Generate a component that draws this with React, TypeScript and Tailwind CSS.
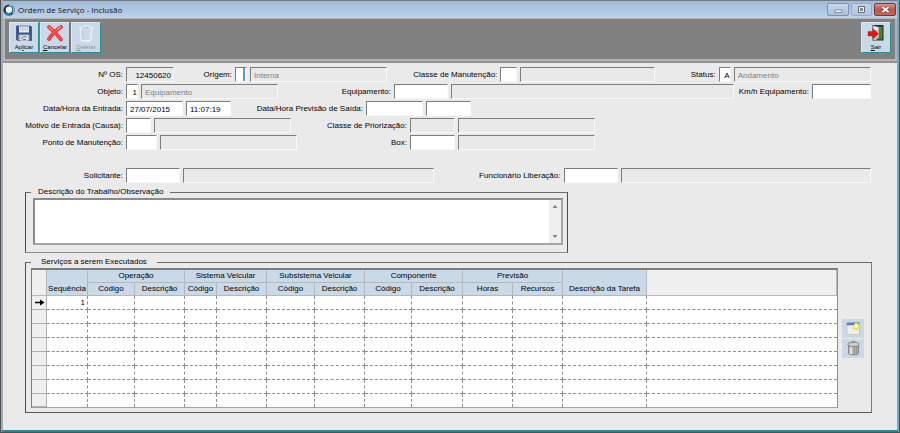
import React, { useState } from 'react';
import { clsx } from 'clsx';

const OPEN_ROWS = [1, 2, 3, 4, 5, 6, 7, 8];

const GROUPS = ['Operação', 'Sistema Veicular', 'Subsistema Veicular', 'Componente'];

const COLUMN_WIDTHS = [
  'w-[15px]',
  'w-[41px]',
  'w-[47px]',
  'w-[50px]',
  'w-[32px]',
  'w-[50px]',
  'w-[48px]',
  'w-[50px]',
  'w-[47px]',
  'w-[51px]',
  'w-[50px]',
  'w-[50px]',
  'w-[84px]',
];

interface FieldProps {
  id: string;
  className: string;
  value?: string;
  readOnly?: boolean;
  label?: string;
}

const Field: React.FC<FieldProps> = ({ id, className, value = '', readOnly = false, label }) => {
  const [text, setText] = useState(value);

  return (
    <input
      id={id}
      type="text"
      aria-label={label}
      value={text}
      readOnly={readOnly}
      onChange={(e) => setText(e.target.value)}
      className={clsx(
        'block h-[15px] min-w-0 border border-t-[#7c7c7c] border-l-[#7c7c7c] border-r-[#f8f8f8] border-b-[#f8f8f8] pt-0.5 leading-3 outline-none',
        readOnly ? 'bg-[#e9e9e9]' : 'bg-white',
        className
      )}
    />
  );
};

const Label: React.FC<{ htmlFor: string; className: string; children: React.ReactNode }> = ({
  htmlFor,
  className,
  children,
}) => (
  <label htmlFor={htmlFor} className={clsx('shrink-0 pt-px text-right leading-[14px] whitespace-nowrap', className)}>
    {children}
  </label>
);

const ToolButton: React.FC<{ letter: string; before?: string; after: string; disabled?: boolean; children: React.ReactNode }> = ({
  letter,
  before,
  after,
  disabled,
  children,
}) => (
  <button
    type="button"
    disabled={disabled}
    className={clsx(
      'flex h-[31px] w-[30px] flex-col items-center border border-t-[#dbe8f2] border-l-[#dbe8f2] border-r-[#2d8c92] border-b-[#2d8c92] bg-[#c9d9e8] pt-px text-[6px] leading-[8px]',
      disabled ? 'text-[#8b949c]' : 'text-black'
    )}
  >
    {children}
    <span className="mt-px">
      {before}
      <span className="underline">{letter}</span>
      {after}
    </span>
  </button>
);

const SaveIcon = () => (
  <svg width="18" height="18" viewBox="0 0 18 18" aria-hidden="true">
    <path d="M1.500 2h14l1 1v13.500h-14l-1-1z" fill="#3a5490" stroke="#22376e" strokeWidth=".6" />
    <path d="M4 2.300h10v6.200H4z" fill="#e3e8f0" />
    <path d="M5 4h8M5 5.700h8" stroke="#b3bccd" strokeWidth=".7" />
    <path d="M3.500 10.500h11v6h-11z" fill="#b4b9c0" />
    <path d="M5.500 11.500H13v5H5.500z" fill="#e7e7e7" />
    <path d="M6.500 15c1-3 4-3 5.500-1M8 15.500h3" fill="none" stroke="#666" strokeWidth="1" />
  </svg>
);

const CancelIcon = () => (
  <svg width="18" height="18" viewBox="0 0 18 18" aria-hidden="true">
    <path d="M3 3c4 3 8 7 12 12.500M15 3C10 6 6 10 3 15" fill="none" stroke="#c22" strokeWidth="3.600" strokeLinecap="round" />
    <path d="M3 3c4 3 8 7 12 12.500M15 3C10 6 6 10 3 15" fill="none" stroke="#fb4848" strokeWidth="2.800" strokeLinecap="round" />
    <path d="M3 3l3.500 2.700M14.500 3L11 5.700" stroke="#ff9c9c" strokeWidth="1" strokeLinecap="round" />
  </svg>
);

const DeleteIcon = () => (
  <svg width="18" height="18" viewBox="0 0 18 18" fill="none" aria-hidden="true">
    <path d="M3.500 4.500l.5 11q.3 1.500 2 1.500h6q1.700 0 2-1.500l.5-11" stroke="#eef4f9" strokeWidth="1.300" />
    <path d="M2.500 5q0-1.500 3-1.500l2-1.500h5l1.500 1.500q2 .3 1.500 1.500" stroke="#eef4f9" strokeWidth="1.200" />
    <path d="M4.800 5.500l.5 9.500M6 3.500h6" stroke="#a5b4c2" strokeWidth=".7" strokeDasharray="2 1" />
  </svg>
);

const ExitIcon = () => (
  <svg width="18" height="18" viewBox="0 0 18 18" aria-hidden="true">
    <path d="M5.500 1h11v15.500h-11z" fill="#1e2a1c" />
    <path d="M12 2.500h3.500v13H10z" fill="#4f7b3b" />
    <path d="M6 1.500l6 1.500v10l-3 3.500-3-.8z" fill="#b9bcb6" />
    <path d="M7 2.500l4 1v3L7 5.500z" fill="#e5e7e3" />
    <path d="M1 7.500h5V5l5.500 4.700L6 14.500V12H1z" fill="#f01212" stroke="#b00808" strokeWidth=".4" />
  </svg>
);

const NewRowIcon = () => (
  <svg width="15" height="15" viewBox="0 0 15 15" aria-hidden="true">
    <path d="M1 2h12.500v11.500H1z" fill="#f0efed" stroke="#b4b6b8" strokeWidth=".6" />
    <path d="M.8 1.500h12.900v2.800H.8z" fill="#5583c4" />
    <path d="M10 .5l1.200 2.200 2.800-.5-1 2.500 1.700 1.900-2.600.6-.6 2.800-2-1.700-2.800.9.700-2.900L5.500 4.500l2.700-.4z" fill="#eae62c" />
    <circle cx="10" cy="5" r="2" fill="#ffffd0" />
  </svg>
);

const TrashIcon = () => (
  <svg width="15" height="16" viewBox="0 0 15 16" aria-hidden="true">
    <path d="M2.500 5v8.500q0 1.500 5 1.500t5-1.500V5z" fill="#b4b4b0" stroke="#6b6b68" strokeWidth=".7" />
    <path d="M4.300 6.500v7.500M5.500 6.500v8" stroke="#dededa" strokeWidth="1.200" />
    <path d="M8.500 7v7.500M10.700 6.500v7.500" stroke="#8d8d88" strokeWidth=".9" />
    <ellipse cx="7.500" cy="4.300" rx="5.700" ry="2.300" fill="#cfcfca" stroke="#71716e" strokeWidth=".8" />
    <path d="M6 2.500q1.500-2 3 0" fill="none" stroke="#676764" strokeWidth=".9" />
  </svg>
);

const TitleBar = () => (
  <header className="flex h-[18px] shrink-0 items-start justify-between border-t border-[#6f7b87] bg-linear-to-b from-[#a0b9d7] to-[#bbd3eb]">
    <div className="flex h-[17px] items-center gap-[3px]">
      <svg width="12" height="12" viewBox="0 0 12 12" aria-hidden="true">
        <circle cx="6" cy="6" r="5.600" fill="#123c5c" />
        <path d="M6 .4A5.600 5.600 0 0 1 10.500 9L6 10A4 4 0 0 0 6 2z" fill="#7fc4cf" />
        <path d="M1 8.500a5.600 5.600 0 0 0 7.500 2.500L7 9z" fill="#2b7f9c" />
        <circle cx="6" cy="5.700" r="3.200" fill="#f3f8fa" />
      </svg>
      <h1 className="font-['Open_Sans','Noto_Sans',sans-serif] text-[8px] leading-4 text-[#101820]">
        Ordem de Serviço - Inclusão
      </h1>
    </div>
    <div className="flex gap-0.5 pt-0.5 pr-px">
      <button
        type="button"
        aria-label="Minimizar"
        className="flex h-[13px] w-[22px] items-center justify-center rounded-xs border border-[#7d90a8] bg-linear-to-b from-[#c9d8ea] to-[#a9c0dc]"
      >
        <svg width="9" height="9" viewBox="0 0 9 9" aria-hidden="true">
          <path d="M1 5h7v2.500H1z" fill="#fff" stroke="#5c6470" strokeWidth=".7" />
        </svg>
      </button>
      <button
        type="button"
        aria-label="Restaurar"
        className="flex h-[13px] w-[21px] items-center justify-center rounded-xs border border-[#98abc3] bg-linear-to-b from-[#bfd1e7] to-[#b0c8e2]"
      >
        <svg width="9" height="9" viewBox="0 0 9 9" aria-hidden="true">
          <path d="M1.500 1.500h6v6h-6z" fill="#eee" stroke="#646c78" strokeWidth="1" />
          <path d="M3.500 3.500h2v2h-2z" fill="#aaa" stroke="#5a5a5a" strokeWidth=".7" />
        </svg>
      </button>
      <button
        type="button"
        aria-label="Fechar"
        className="flex h-[13px] w-[22px] items-center justify-center rounded-xs border border-[#703a3c] bg-linear-to-b from-[#d79a8d] via-[#c35343] to-[#c4655a]"
      >
        <svg width="9" height="9" viewBox="0 0 9 9" aria-hidden="true">
          <path d="M1.500 2l6 5M7.500 2l-6 5" stroke="#59484d" strokeWidth="3" />
          <path d="M1.500 2l6 5M7.500 2l-6 5" stroke="#fff" strokeWidth="1.900" />
        </svg>
      </button>
    </div>
  </header>
);

const OrderForm = () => (
  <div className="flex flex-col gap-0.5 pt-1 pr-[26px]">
    <div className="flex gap-[3px]">
      <Label htmlFor="os" className="w-[120px]">Nº OS:</Label>
      <Field id="os" className="w-12 pr-0.5 text-right" value="12450620" readOnly />
      <Label htmlFor="origem" className="w-[55px]">Origem:</Label>
      <Field
        id="origem"
        className="w-3 bg-[linear-gradient(90deg,#fff_7px,#4f9fd4_7px,#4f9fd4_9px,#fff_9px)]"
      />
      <Field id="origem-desc" label="Descrição da origem" className="flex-1 pl-[3px] text-[#808080]" value="Interna" readOnly />
      <Label htmlFor="classe" className="w-[107px]">Classe de Manutenção:</Label>
      <Field id="classe" className="w-[17px]" />
      <Field id="classe-desc" label="Descrição da classe" className="flex-1" readOnly />
      <Label htmlFor="status" className="w-[58px]">Status:</Label>
      <Field id="status" className="w-3 text-right" value="A" />
      <Field id="status-desc" label="Descrição do status" className="flex-1 pl-[3px] text-[#808080]" value="Andamento" readOnly />
    </div>

    <div className="flex gap-[3px]">
      <Label htmlFor="objeto" className="w-[120px]">Objeto:</Label>
      <Field id="objeto" className="w-3 text-right" value="1" />
      <Field id="objeto-desc" label="Descrição do objeto" className="w-[137px] pl-[3px] text-[#808080]" value="Equipamento" readOnly />
      <Label htmlFor="equipamento" className="w-[110px]">Equipamento:</Label>
      <Field id="equipamento" className="w-[54px]" />
      <Field id="equipamento-desc" label="Descrição do equipamento" className="flex-1" readOnly />
      <Label htmlFor="km" className="w-[72px]">Km/h Equipamento:</Label>
      <Field id="km" className="w-[59px]" />
    </div>

    <div className="flex gap-[3px]">
      <Label htmlFor="entrada" className="w-[120px]">Data/Hora da Entrada:</Label>
      <Field id="entrada" className="w-[57px] pl-[3px]" value="27/07/2015" />
      <Field id="entrada-hora" label="Hora da entrada" className="w-[45px] pl-[3px]" value="11:07:19" />
      <Label htmlFor="saida" className="w-[129px]">Data/Hora Previsão de Saída:</Label>
      <Field id="saida" className="w-[57px]" />
      <Field id="saida-hora" label="Hora da saída" className="w-[45px]" />
    </div>

    <div className="flex gap-[3px]">
      <Label htmlFor="motivo" className="w-[120px]">Motivo de Entrada (Causa):</Label>
      <Field id="motivo" className="w-[25px]" />
      <Field id="motivo-desc" label="Descrição do motivo" className="w-[137px]" readOnly />
      <Label htmlFor="priorizacao" className="w-[113px]">Classe de Priorização:</Label>
      <Field id="priorizacao" className="w-[45px]" readOnly />
      <Field id="priorizacao-desc" label="Descrição da priorização" className="w-[137px]" readOnly />
    </div>

    <div className="flex gap-[3px]">
      <Label htmlFor="ponto" className="w-[120px]">Ponto de Manutenção:</Label>
      <Field id="ponto" className="w-[31px]" />
      <Field id="ponto-desc" label="Descrição do ponto" className="w-[137px]" readOnly />
      <Label htmlFor="box" className="w-[107px]">Box:</Label>
      <Field id="box" className="w-[45px]" />
      <Field id="box-desc" label="Descrição do box" className="w-[137px]" readOnly />
    </div>

    <div className="mt-4 flex gap-[3px]">
      <Label htmlFor="solicitante" className="w-[120px]">Solicitante:</Label>
      <Field id="solicitante" className="w-[54px]" />
      <Field id="solicitante-desc" label="Nome do solicitante" className="flex-1" readOnly />
      <Label htmlFor="liberacao" className="w-[124px]">Funcionário Liberação:</Label>
      <Field id="liberacao" className="w-[54px]" />
      <Field id="liberacao-desc" label="Nome do funcionário" className="flex-1" readOnly />
    </div>
  </div>
);

const ServicesTable = () => (
  <table className="w-full table-fixed border-separate border-spacing-0 bg-white text-center">
    <colgroup>
      {COLUMN_WIDTHS.map((width, i) => (
        <col key={i} className={width} />
      ))}
      <col />
    </colgroup>
    <thead className="bg-[#c9d9e8] leading-3 [&_th]:border-r [&_th]:border-b [&_th]:border-[#b3b9be] [&_th]:p-0 [&_th]:font-normal [&_th]:whitespace-nowrap">
      <tr className="h-[13px]">
        <th rowSpan={2} aria-label="Linha atual" className="bg-[#efefef]" />
        <th rowSpan={2} className="align-bottom">Sequência</th>
        {GROUPS.map((group) => (
          <th key={group} colSpan={2}>{group}</th>
        ))}
        <th colSpan={2}>Previsão</th>
        <th rowSpan={2} className="align-bottom">Descrição da Tarefa</th>
        <th rowSpan={2} aria-hidden="true" className="bg-[#efefef]" />
      </tr>
      <tr className="h-[13px]">
        {GROUPS.map((group) => (
          <React.Fragment key={group}>
            <th>Código</th>
            <th>Descrição</th>
          </React.Fragment>
        ))}
        <th>Horas</th>
        <th>Recursos</th>
      </tr>
    </thead>
    <tbody className="[&_td]:border-r [&_td]:border-b [&_td]:border-dashed [&_td]:border-[#8f8f8f] [&_td]:p-0 [&_td:last-child]:border-r-0 [&_tr:last-child_td]:border-b-0">
      {OPEN_ROWS.map((row) => (
        <tr key={row} className="h-[14px] leading-3 last:h-[13px]">
          <th className="border-r border-b border-[#b0b0b0] bg-[#efefef] p-0">
            {row === 1 && (
              <svg className="mx-auto block" width="11" height="9" viewBox="0 0 11 9" aria-label="Linha atual">
                <path d="M1 3.800h5V1.500L10.500 4.500 6 7.500V5.200H1z" fill="#000" />
              </svg>
            )}
          </th>
          <td className="text-right">{row === 1 && <span className="pr-0.5">1</span>}</td>
          {COLUMN_WIDTHS.slice(1).map((_, i) => (
            <td key={i} />
          ))}
        </tr>
      ))}
    </tbody>
  </table>
);

export default function App() {
  const [notes, setNotes] = useState('');

  return (
    <div className="flex min-h-screen flex-col border-r border-b border-l border-[#4d5257] bg-[#eaeaea] font-['Liberation_Sans',Arial,sans-serif] text-[8px] text-black">
      <div className="flex flex-1 flex-col border-r-2 border-b-2 border-l-2 border-r-[#65aecb] border-b-[#2b8795] border-l-[#a6a9b3]">
        <TitleBar />

        {/* Toolbar */}
        <div className="flex items-start justify-between border-x-2 border-t border-b-2 border-[#b4b4b4] bg-[#808080] px-1 pt-[3px] pb-[6px]">
          <div className="flex gap-px">
            <ToolButton before="Ap" letter="l" after="icar">
              <SaveIcon />
            </ToolButton>
            <ToolButton letter="C" after="ancelar">
              <CancelIcon />
            </ToolButton>
            <ToolButton letter="D" after="eletar" disabled>
              <DeleteIcon />
            </ToolButton>
          </div>
          <ToolButton letter="S" after="air">
            <ExitIcon />
          </ToolButton>
        </div>

        <main className="flex-1 border-t-2 border-[#929292]">
          <OrderForm />

          <fieldset className="mt-[3px] ml-[22px] w-[543px] border border-t-[#6a6a6a] border-r-[#4a4a4a] border-b-[#8b8b8b] border-l-[#4a4a4a] pr-1 pb-[7px] pl-[7px]">
            <legend className="-ml-0.5 px-[7px] leading-3">Descrição do Trabalho/Observação</legend>
            <div className="flex h-[47px] border-2 border-t-[#8b8b8b] border-r-[#a5a5a5] border-b-[#a5a5a5] border-l-[#8b8b8b] bg-white">
              <textarea
                aria-label="Descrição do Trabalho/Observação"
                value={notes}
                onChange={(e) => setNotes(e.target.value)}
                className="block min-w-0 flex-1 resize-none p-0.5 outline-none"
              />
              <div className="flex w-3 flex-col justify-between bg-[#efefef] py-1">
                <button type="button" aria-label="Rolar para cima" className="flex justify-center">
                  <svg width="6" height="5" viewBox="0 0 6 5" aria-hidden="true">
                    <path d="M3 .8L5.500 4h-5z" fill="#858585" />
                  </svg>
                </button>
                <button type="button" aria-label="Rolar para baixo" className="flex justify-center">
                  <svg width="6" height="5" viewBox="0 0 6 5" aria-hidden="true">
                    <path d="M3 4.200L5.500 1h-5z" fill="#858585" />
                  </svg>
                </button>
              </div>
            </div>
          </fieldset>

          <fieldset className="mt-[3px] mr-[25px] ml-[22px] min-w-0 border border-t-[#6a6a6a] border-r-[#7c7c7c] border-b-[#5a5a5a] border-l-[#4a4a4a] px-[5px] pb-1">
            <legend className="px-[10px] leading-3">Serviços a serem Executados</legend>
            <div className="flex items-center gap-1">
              <div className="min-w-0 flex-1 border border-t-2 border-t-[#7c7c7c] border-r-[#8f8f8f] border-b-[#a0a0a0] border-l-[#7c7c7c]">
                <ServicesTable />
              </div>
              <div className="mr-0.5 flex flex-col gap-px">
                <button type="button" aria-label="Incluir serviço" className="flex h-[19px] w-[22px] items-center justify-center bg-[#c9d9e8]">
                  <NewRowIcon />
                </button>
                <button type="button" aria-label="Excluir serviço" className="flex h-[19px] w-[22px] items-center justify-center bg-[#c9d9e8]">
                  <TrashIcon />
                </button>
              </div>
            </div>
          </fieldset>
        </main>
      </div>
    </div>
  );
}
